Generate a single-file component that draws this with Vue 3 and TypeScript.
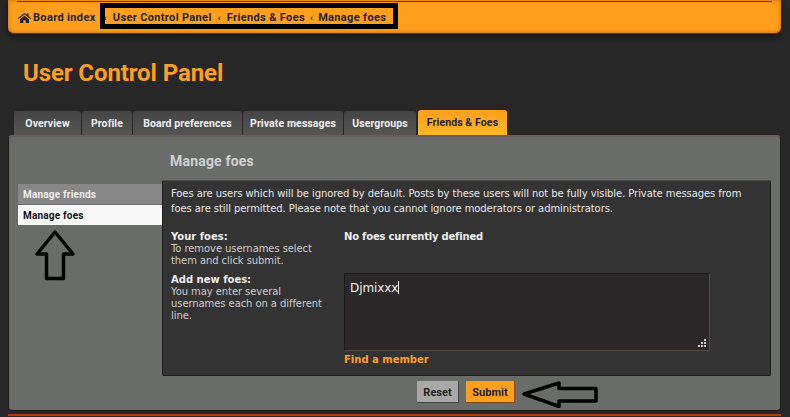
<script setup lang="ts">
const tabs = ['Overview', 'Profile', 'Board preferences', 'Private messages', 'Usergroups']
</script>

<template>
  <div class="page">
    <header class="topbar">
      <div class="rule"></div>
      <nav class="crumbs">
        <svg class="home" width="13" height="10" viewBox="0 0 13 10"><path d="M6.500 0 0 5l.7.9L6.500 1.500l5.800 4.400.7-.9-2.500-1.900V.5H9v1.300zM2 6.200V10h3.300V7.200h2.400V10H11V6.200L6.500 2.800z" fill="#222"/></svg>
        <span class="crumb first">Board index</span>
        <span class="sep">‹</span><span class="crumb">User Control Panel</span>
        <span class="sep">‹</span><span class="crumb">Friends &amp; Foes</span>
        <span class="sep last">‹</span><span class="crumb">Manage foes</span>
      </nav>
      <div class="callout"></div>
    </header>

    <h1 class="title">User Control Panel</h1>

    <div class="tabs">
      <span v-for="t in tabs" :key="t" class="tab">{{ t }}</span>
      <span class="tab active">Friends &amp; Foes</span>
    </div>

    <section class="panel">
      <div class="side">
        <a class="side-item">Manage friends</a>
        <a class="side-item on">Manage foes</a>
        <svg class="arrow-up" width="44" height="54" viewBox="0 0 44 54"><path d="M22 4 4 26h9.500v24.500h17V26H40z" fill="none" stroke="#000" stroke-width="3.500" stroke-linejoin="round"/></svg>
      </div>
      <div class="main">
        <h2 class="heading">Manage foes</h2>
        <div class="box">
          <p class="intro">Foes are users which will be ignored by default. Posts by these users will not be fully visible. Private messages from foes are still permitted. Please note that you cannot ignore moderators or administrators.</p>
          <div class="row first-row">
            <div class="label"><b>Your foes:</b><span>To remove usernames select them and click submit.</span></div>
            <div class="value"><b>No foes currently defined</b></div>
          </div>
          <div class="row">
            <div class="label"><b>Add new foes:</b><span>You may enter several usernames each on a different line.</span></div>
            <div class="value">
              <div class="textarea">Djmixxx<i class="caret"></i>
                <svg class="grip" width="8" height="8" viewBox="0 0 8 8" fill="#ccc"><rect x="6" y="0" width="2" height="2"/><rect x="3" y="3" width="2" height="2"/><rect x="6" y="3" width="2" height="2"/><rect x="0" y="6" width="2" height="2"/><rect x="3" y="6" width="2" height="2"/><rect x="6" y="6" width="2" height="2"/></svg>
              </div>
              <a class="find">Find a member</a>
            </div>
          </div>
        </div>
        <div class="actions">
          <button class="btn reset">Reset</button>
          <button class="btn submit">Submit</button>
          <svg class="arrow-left" width="78" height="28" viewBox="0 0 78 28"><path d="M3 14 38 3v5.500h37v12.500H38v5.500z" fill="none" stroke="#000" stroke-width="3.500" stroke-linejoin="round"/></svg>
        </div>
      </div>
    </section>
    <div class="footer-strip"></div>
  </div>
</template>

<style>
html, body { margin: 0; background: #272727; }
</style>

<style scoped>
.page {
  width: 790px;
  height: 417px;
  overflow: hidden;
  background: #272727;
  font-family: "DejaVu Sans", sans-serif;
  font-size: 10px;
  letter-spacing: -.08px;
  color: #ddd;
  position: relative;
}
.topbar {
  position: relative;
  margin: 0 9px 0 8px;
  height: 34px;
  box-sizing: border-box;
  padding: 1px 9px 0;
  background: #ff9f1c;
  border-bottom: 1px solid #7c2a05;
  border-radius: 0 0 6px 6px;
  box-shadow: inset 0 0 5px rgba(150, 70, 0, .55), 0 3px 6px rgba(0, 0, 0, .45);
}
.rule { height: 1px; background: #7a3d08; }
.crumbs {
  display: flex;
  align-items: center;
  height: 31px;
  padding-left: 1px;
  font: 700 11px Roboto, sans-serif;
  letter-spacing: .35px;
  color: #222;
  white-space: nowrap;
}
.home { margin-right: 2px; }
.first { margin-right: 2px; }
.sep { margin: 0 6px; font-size: 9px; }
.sep.last { margin: 0 5px; }
.callout {
  position: absolute;
  left: 92px;
  top: 3px;
  width: 298px;
  height: 26px;
  box-sizing: border-box;
  border: 5px solid #000;
}
.title {
  margin: 25px 0 0 23px;
  height: 28px;
  font: 700 24px/28px Roboto, sans-serif;
  letter-spacing: -.1px;
  color: #ff9f1c;
}
.tabs {
  display: grid;
  grid-template-columns: 67px 50px 109px 100px 72px 89px;
  column-gap: 1px;
  margin: 23px 0 0 14px;
  width: max-content;
  height: 25px;
  align-items: end;
}
.tab {
  height: 24px;
  box-sizing: border-box;
  text-align: center;
  background: linear-gradient(#444, #555);
  border-radius: 3px 3px 0 0;
  font: 700 10.500px/25px Roboto, sans-serif;
  letter-spacing: .1px;
  color: #eee;
  white-space: nowrap;
}
.tab.active {
  height: 25px;
  margin-left: 1px;
  width: 89px;
  background: linear-gradient(#ff9f1c, #ffb628);
  color: #222;
}
.panel {
  display: flex;
  box-sizing: border-box;
  margin: 0 9px 0 8px;
  height: 276px;
  padding: 0 9px;
  background: #6a6c6a;
  border-top: 2px solid #665f5c;
  border-right: 1px solid #1c1c1c;
  border-bottom: 1px solid #1c1c1c;
  border-left: 1px solid #1c1c1c;
  border-radius: 4px;
  box-shadow: inset 2px 0 2px #6f6663;
}
.side { width: 144px; padding-top: 47px; position: relative; flex: none; }
.side-item {
  display: block;
  height: 20px;
  padding-left: 5px;
  font: 700 10px/21px Roboto, sans-serif;
  letter-spacing: .2px;
  background: #878787;
  color: #eee;
  margin-bottom: 1px;
}
.side-item.on { background: #f8f8f8; color: #111; }
.arrow-up { position: absolute; left: 15px; top: 91px; }
.main { flex: 1; min-width: 0; }
.heading {
  margin: 0;
  height: 43px;
  box-sizing: border-box;
  padding: 17px 0 0 8px;
  font: 700 14px/15px Roboto, sans-serif;
  letter-spacing: .2px;
  color: #d0d0d0;
}
.box {
  box-sizing: border-box;
  height: 196px;
  padding: 5px 8px 0;
  background: #333;
  border: 1px solid #1d1d1d;
  border-top-color: #4a4442;
  border-radius: 2px;
}
.intro { margin: 0 0 15px; line-height: 15px; color: #e8e8e8; }
.row { display: flex; margin-bottom: 7px; }
.first-row { height: 36px; }
.label { width: 173px; flex: none; line-height: 12px; color: #ccc; padding-right: 20px; box-sizing: border-box; }
.label b { display: block; color: #eee; letter-spacing: 0; }
.label span { display: block; }
.value b { color: #eee; letter-spacing: -.2px; }
.textarea {
  position: relative;
  box-sizing: border-box;
  width: 366px;
  height: 78px;
  margin-top: -1px;
  padding: 7px 5px;
  background: #2b2829;
  border: 1px solid #1b1b1b;
  border-right-color: #5a4a3c;
  border-bottom-color: #5a4a3c;
  font-size: 12px;
  line-height: 15px;
  color: #eee;
}
.caret { display: inline-block; width: 1px; height: 13px; background: #eee; vertical-align: -2px; }
.grip { position: absolute; right: 3px; bottom: 3px; }
.find { display: block; margin-top: 3px; font-weight: 700; color: #ff9f1c; letter-spacing: 0; }
.actions {
  position: relative;
  display: flex;
  gap: 7px;
  margin-top: 5px;
  padding-left: 255px;
}
.btn {
  width: 42px;
  height: 22px;
  padding: 1px 0 0;
  font: 700 11px Roboto, sans-serif;
  border: 0;
  border-right: 1px solid #444;
  border-bottom: 1px solid #444;
  color: #222;
  background: #a8a8a8;
}
.submit { width: 49px; background: #ff9f1c; border-color: #7c4a05; }
.arrow-left { position: absolute; left: 359px; top: -1px; }
.footer-strip {
  margin: 3px 9px 0 8px;
  height: 2px;
  background: #b8380a;
}
</style>
